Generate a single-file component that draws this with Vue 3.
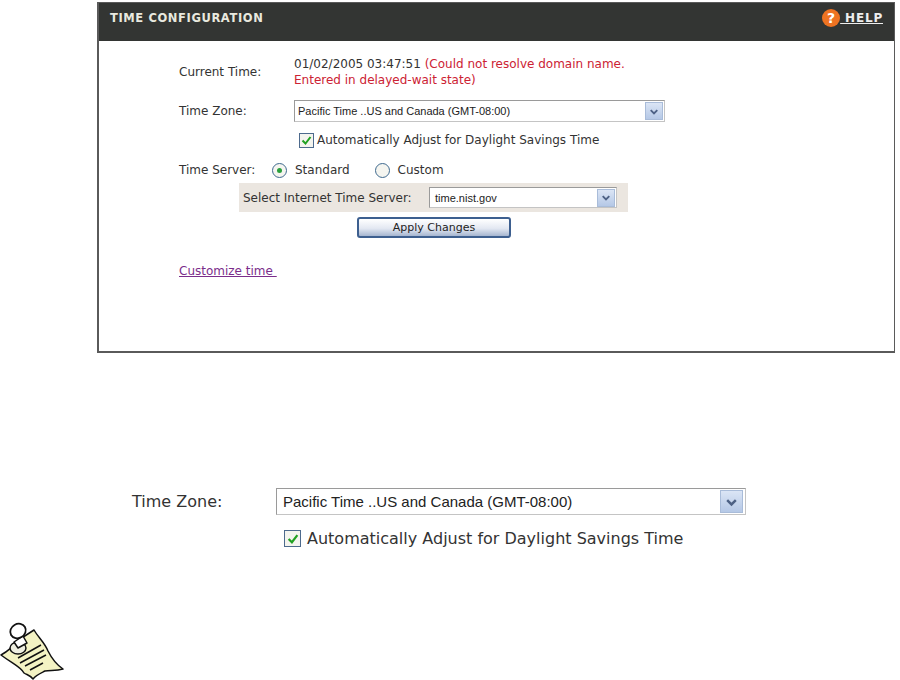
<script setup>
const timeZone = 'Pacific Time ..US and Canada (GMT-08:00)'
const checkLabel = 'Automatically Adjust for Daylight Savings Time'
</script>

<template>
  <div class="page">
    <section class="panel">
      <header class="panel-head">
        <h1>TIME CONFIGURATION</h1>
        <a class="help">
          <span class="help-icon">?</span><span class="help-text">&nbsp;HELP</span>
        </a>
      </header>
      <div class="panel-body">
        <div class="row row-time">
          <div class="label">Current Time:</div>
          <div class="status">
            01/02/2005 03:47:51 <span class="err">(Could not resolve domain name.<br />Entered in delayed-wait state)</span>
          </div>
        </div>
        <div class="row row-zone">
          <div class="label">Time Zone:</div>
          <div class="select zone-select">
            <span>{{ timeZone }}</span>
            <span class="arrow">
              <svg width="17" height="17" viewBox="0 0 17 17"><path d="M5 7l3.5 3.5L12 7" fill="none" stroke="#4d6185" stroke-width="2" /></svg>
            </span>
          </div>
        </div>
        <label class="check-row">
          <span class="check">
            <svg width="11" height="11" viewBox="0 0 11 11"><path d="M1.5 5.5l3 3 5-6.500" fill="none" stroke="#21a121" stroke-width="2" /></svg>
          </span>
          {{ checkLabel }}
        </label>
        <div class="row row-server">
          <div class="label">Time Server:</div>
          <div class="radios">
            <span class="radio on"></span><span class="radio-text">Standard</span>
            <span class="radio custom"></span><span class="radio-text">Custom</span>
          </div>
        </div>
        <div class="server-band">
          <span>Select Internet Time Server:</span>
          <div class="select server-select">
            <span>time.nist.gov</span>
            <span class="arrow">
              <svg width="17" height="17" viewBox="0 0 17 17"><path d="M5 7l3.500 3.500L12 7" fill="none" stroke="#4d6185" stroke-width="2" /></svg>
            </span>
          </div>
        </div>
        <button class="apply">Apply Changes</button>
        <a class="customize">Customize time&nbsp;</a>
      </div>
    </section>

    <div class="detail">
      <div class="detail-row">
        <div class="detail-label">Time Zone:</div>
        <div class="select detail-select">
          <span>{{ timeZone }}</span>
          <span class="arrow">
            <svg width="22" height="22" viewBox="0 0 17 17"><path d="M5 7l3.500 3.500L12 7" fill="none" stroke="#4d6185" stroke-width="2" /></svg>
          </span>
        </div>
      </div>
      <label class="detail-check">
        <span class="check big">
          <svg width="12" height="12" viewBox="0 0 11 11"><path d="M1.500 5.500l3 3 5-6.500" fill="none" stroke="#21a121" stroke-width="2" /></svg>
        </span>
        {{ checkLabel }}
      </label>
    </div>

    <svg class="note" width="64" height="60" viewBox="0 0 64 60">
      <path d="M1 34C8 30 13 26 17 20L34 9C38 16 45 22 48 30C52 38 57 44 63 48C56 50 50 49 45 50C41 52 36 54 33 58C30 54 27 54 24 52C21 46 13 43 1 34Z" fill="#f4f3c4" stroke="#111" stroke-width="1.500" stroke-linejoin="round" />
      <path d="M18 37L41 24M20 42L44 29M25 45L46 34M30 49L43 42" fill="none" stroke="#111" stroke-width="1.500" />
      <ellipse cx="18" cy="27" rx="8" ry="6" fill="#eeeee0" stroke="#111" stroke-width="1.500" />
      <path d="M14 21L23 15L27 22L18 27Z" fill="#fff" stroke="#111" stroke-width="1.500" stroke-linejoin="round" />
      <ellipse cx="18" cy="10" rx="8" ry="7" transform="rotate(-30 18 10)" fill="#fff" stroke="#111" stroke-width="1.800" />
    </svg>
  </div>
</template>

<style scoped>
.page {
  position: relative;
  width: 900px;
  height: 680px;
  overflow: hidden;
  background: #fff;
  font-family: "DejaVu Sans", sans-serif;
  color: #333;
  font-size: 12px;
}

.panel {
  box-sizing: border-box;
  width: 798px;
  height: 351px;
  margin: 2px 0 0 97px;
  border: 1px solid #5a5a5a;
  border-width: 1px 1px 2px 2px;
}

.panel-head {
  height: 38px;
  background: #333533;
  display: flex;
  align-items: center;
  justify-content: space-between;
  padding: 0 11px 8px 11px;
  box-sizing: border-box;
}

h1 {
  margin: 0;
  font-size: 11.5px;
  font-weight: bold;
  letter-spacing: 0.6px;
  color: #e9e9df;
}

.help {
  display: flex;
  align-items: center;
  color: #eee;
  font-weight: bold;
  font-size: 12px;
  letter-spacing: 0.8px;
}

.help-icon {
  width: 18px;
  height: 18px;
  border-radius: 50%;
  background: #ee7322;
  color: #fff;
  font-size: 14px;
  line-height: 18px;
  text-align: center;
  letter-spacing: 0;
}

.help-text {
  text-decoration: underline;
}

.panel-body {
  padding: 15px 0 0 80px;
}

.row {
  display: flex;
  align-items: center;
}

.label {
  width: 115px;
  flex: none;
}

.status {
  line-height: 16px;
}

.err {
  color: #cc2233;
}

.row-time {
  height: 32px;
}

.row-zone {
  margin-top: 12px;
}

.select {
  box-sizing: border-box;
  display: flex;
  align-items: center;
  justify-content: space-between;
  background: #fff;
  border: 1px solid #a9a9a9;
  border-color: #9a9a9a #c4c4c4 #c4c4c4 #9a9a9a;
  color: #222;
}

.zone-select {
  width: 371px;
  height: 22px;
  padding: 0 1px 0 3px;
  font-size: 11px;
  font-family: "Liberation Sans", sans-serif;
}

.arrow {
  display: flex;
  align-items: center;
  justify-content: center;
  background: linear-gradient(#dbe5f5, #b5c8e6);
  border: 1px solid #a9bcd9;
  box-sizing: border-box;
}

.zone-select .arrow,
.server-select .arrow {
  width: 18px;
  height: 18px;
}

.check-row {
  display: flex;
  align-items: center;
  gap: 3px;
  margin: 9px 0 0 120px;
  height: 18px;
}

.check {
  box-sizing: border-box;
  width: 15px;
  height: 15px;
  display: flex;
  align-items: center;
  justify-content: center;
  border: 1px solid #4d6a8d;
  background: #f4f4ee;
}

.row-server {
  margin-top: 12px;
  height: 18px;
}

.radios {
  display: flex;
  align-items: center;
  margin-left: -22px;
}

.radio {
  box-sizing: border-box;
  width: 15px;
  height: 15px;
  border-radius: 50%;
  border: 1px solid #3f6a8f;
  background: #f5f5f0;
  margin-right: 8px;
  position: relative;
}

.radio.on::after {
  content: "";
  position: absolute;
  left: 4px;
  top: 4px;
  width: 5px;
  height: 5px;
  border-radius: 50%;
  background: #2aa03c;
}

.radio.custom {
  margin-left: 25px;
}

.server-band {
  box-sizing: border-box;
  display: flex;
  align-items: center;
  justify-content: space-between;
  width: 389px;
  height: 29px;
  margin: 4px 0 0 60px;
  padding: 0 11px 0 4px;
  background: #ebe6e0;
}

.server-select {
  width: 188px;
  height: 21px;
  padding: 0 1px 0 5px;
  font-size: 11px;
  font-family: "Liberation Sans", sans-serif;
}

.apply {
  display: block;
  box-sizing: border-box;
  width: 154px;
  height: 21px;
  margin: 5px 0 0 178px;
  padding: 0;
  border: 2px solid #3d5f8f;
  border-radius: 3px;
  background: linear-gradient(#ffffff, #e3e8f2 55%, #a6b6d0);
  color: #222;
  font-family: "DejaVu Sans", sans-serif;
  font-size: 11px;
}

.customize {
  display: inline-block;
  margin-top: 26px;
  color: #7b2d8b;
  text-decoration: underline;
}

.detail {
  margin-left: 132px;
  margin-top: 135px;
}

.detail-row {
  display: flex;
  align-items: center;
}

.detail-label {
  width: 144px;
  flex: none;
  font-size: 16px;
}

.detail-select {
  width: 470px;
  height: 27px;
  padding: 0 2px 0 6px;
  font-size: 15px;
  font-family: "Liberation Sans", sans-serif;
}

.detail-select .arrow {
  width: 23px;
  height: 23px;
}

.detail-check {
  display: flex;
  align-items: center;
  gap: 6px;
  margin: 14px 0 0 152px;
  font-size: 16px;
}

.check.big {
  width: 17px;
  height: 17px;
}

.note {
  position: absolute;
  left: 0;
  top: 621px;
}
</style>
